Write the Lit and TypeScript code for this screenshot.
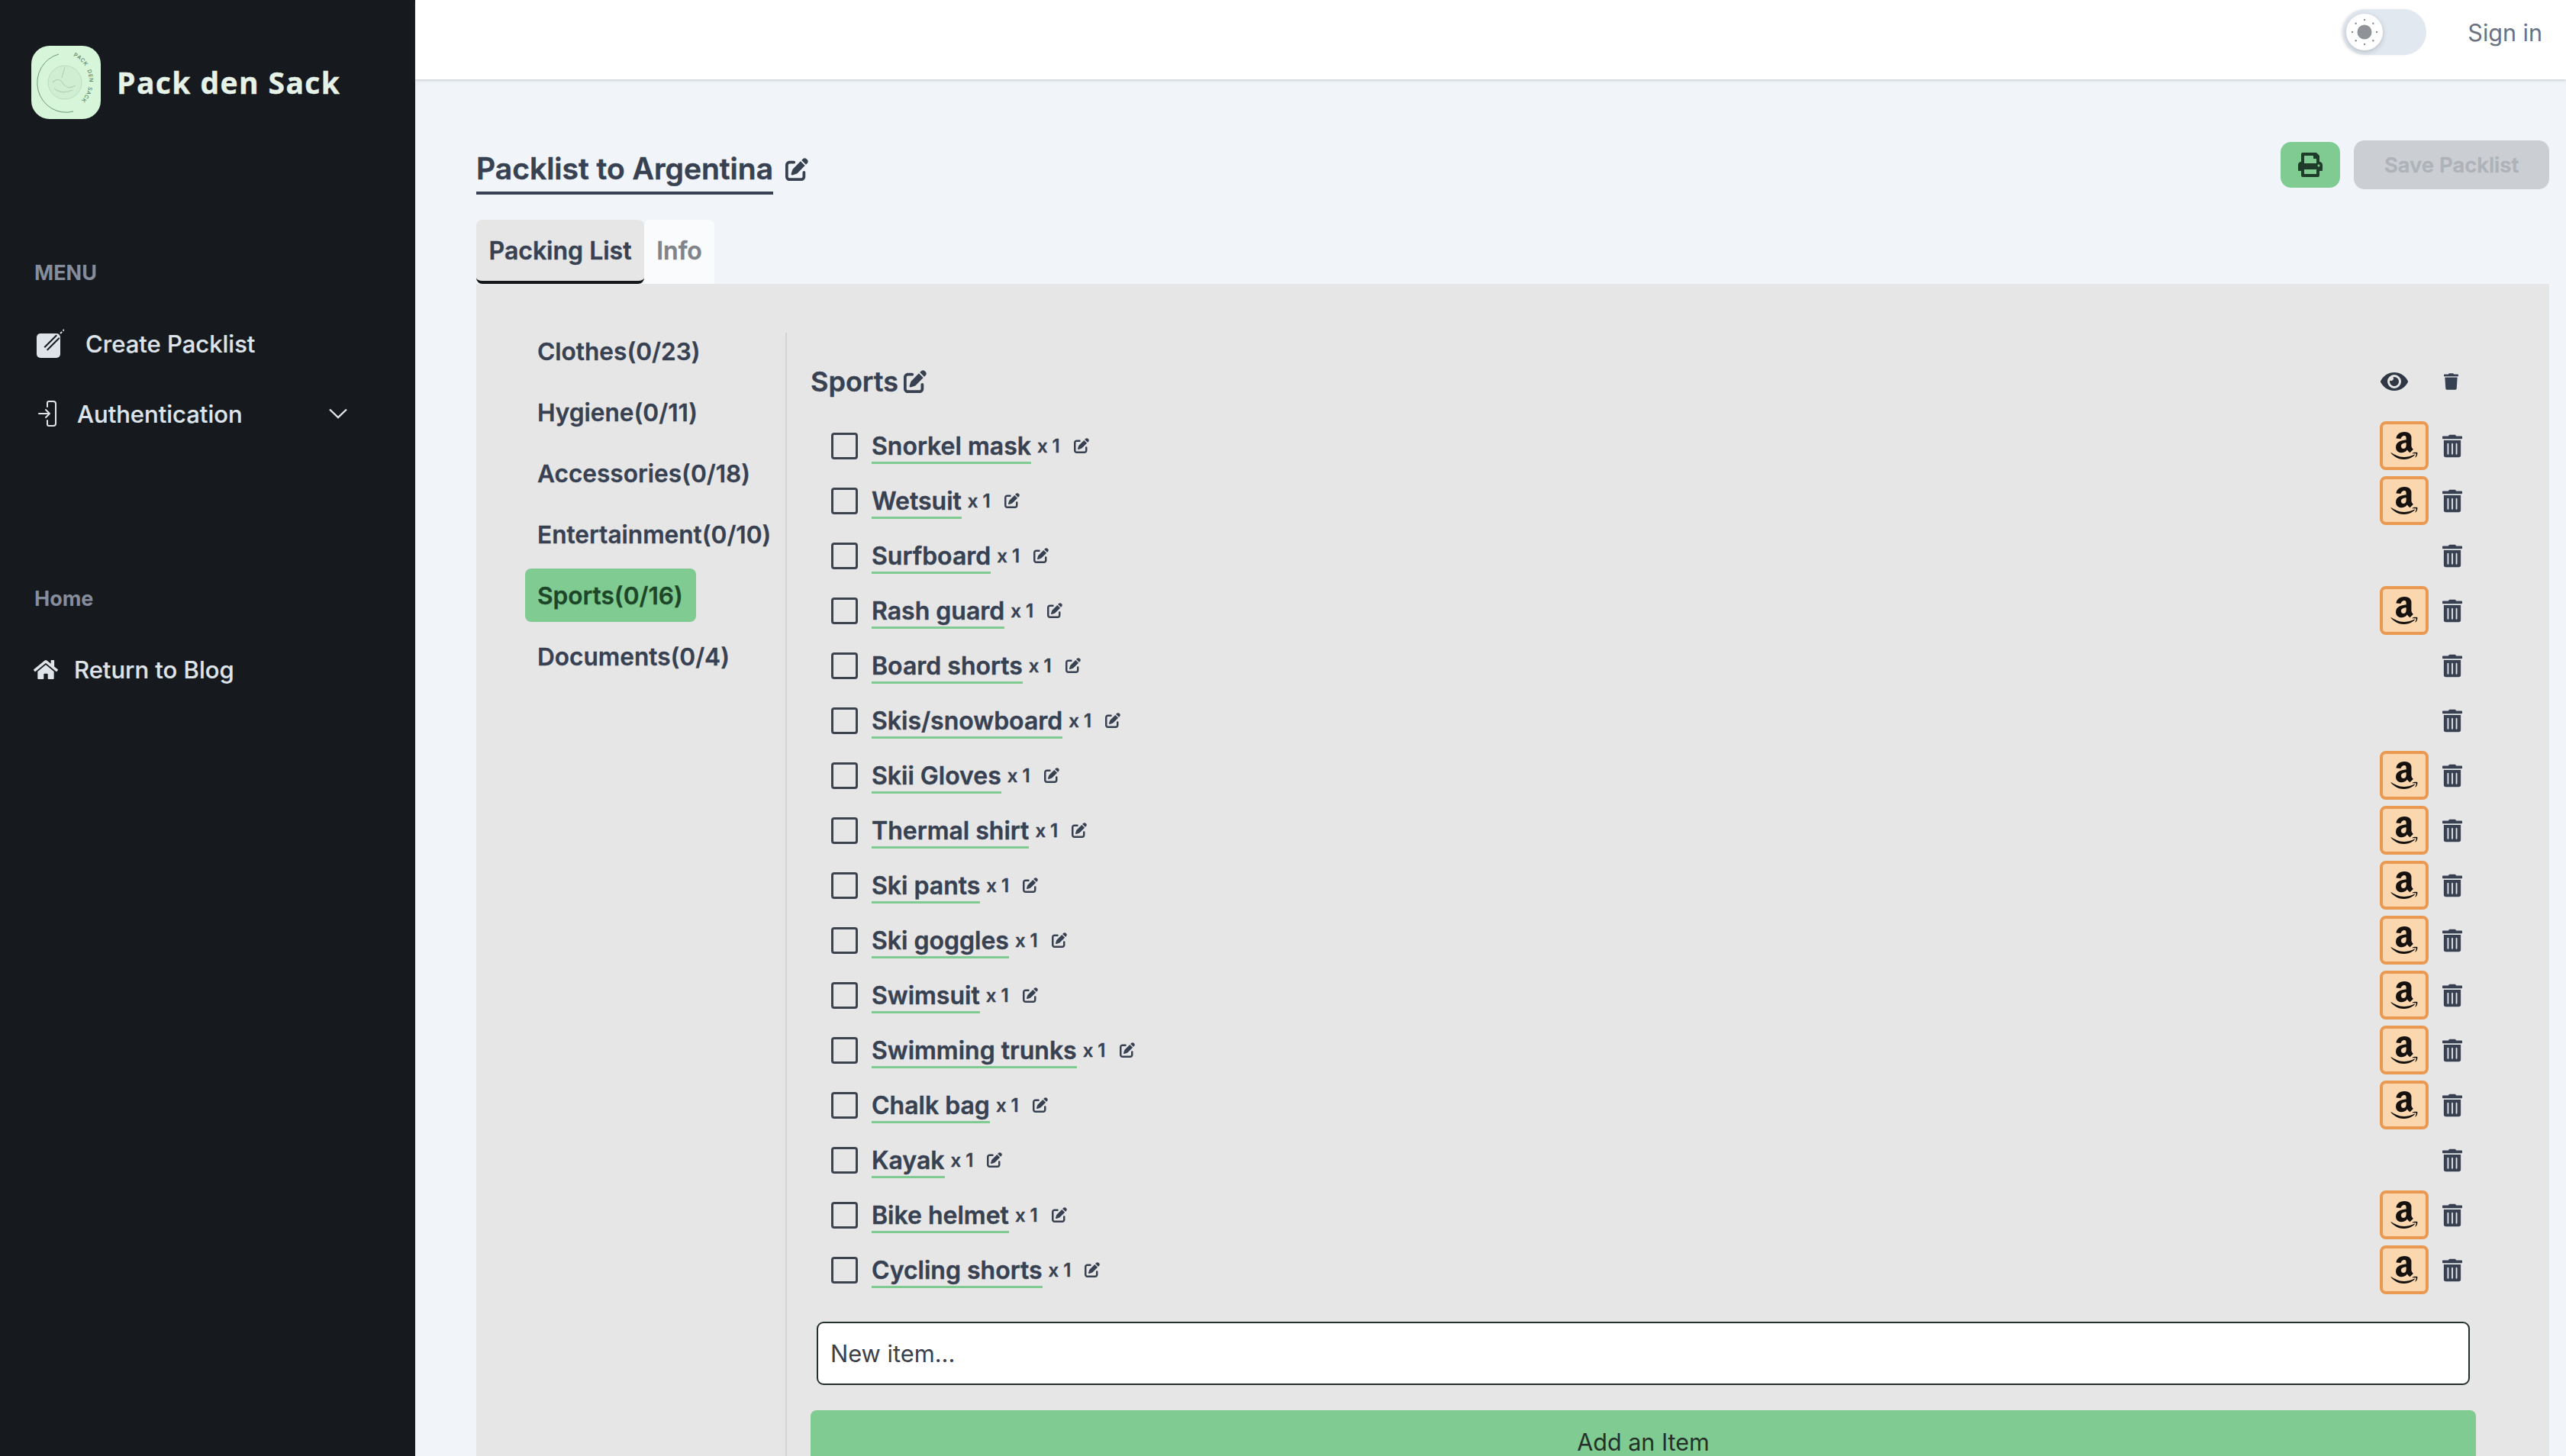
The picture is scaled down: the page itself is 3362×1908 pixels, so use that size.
import { LitElement, html, css, svg } from "lit";
import { customElement } from "lit/decorators.js";

const editIcon = html`<svg class="ic" viewBox="0 0 512 512"><path d="M471.6 21.7c-21.9-21.9-57.3-21.9-79.2 0L362.3 51.7l97.9 97.9 30.1-30.1c21.9-21.9 21.9-57.3 0-79.2L471.6 21.7zm-299.2 220c-6.1 6.1-10.8 13.6-13.5 21.9l-29.6 88.8c-2.9 8.6-.6 18.1 5.8 24.6s15.9 8.7 24.6 5.8l88.8-29.6c8.2-2.7 15.7-7.4 21.9-13.5L437.7 172.3 339.7 74.3 172.4 241.7zM96 64C43 64 0 107 0 160V416c0 53 43 96 96 96H352c53 0 96-43 96-96V320c0-17.7-14.3-32-32-32s-32 14.3-32 32v96c0 17.7-14.3 32-32 32H96c-17.7 0-32-14.3-32-32V160c0-17.7 14.3-32 32-32h96c17.7 0 32-14.3 32-32s-14.3-32-32-32H96z"/></svg>`;
const trashAlt = html`<svg class="ic" viewBox="0 0 448 512"><path d="M32 464a48 48 0 0 0 48 48h288a48 48 0 0 0 48-48V128H32zm272-256a16 16 0 0 1 32 0v224a16 16 0 0 1-32 0zm-96 0a16 16 0 0 1 32 0v224a16 16 0 0 1-32 0zm-96 0a16 16 0 0 1 32 0v224a16 16 0 0 1-32 0zM432 32H312l-9.4-18.7A24 24 0 0 0 281.1 0H166.8a23.72 23.72 0 0 0-21.4 13.3L136 32H16A16 16 0 0 0 0 48v32a16 16 0 0 0 16 16h416a16 16 0 0 0 16-16V48a16 16 0 0 0-16-16z"/></svg>`;
const trashSolid = html`<svg class="ic" viewBox="0 0 448 512"><path d="M432 32H312l-9.4-18.7A24 24 0 0 0 281.1 0H166.8a23.72 23.72 0 0 0-21.4 13.3L136 32H16A16 16 0 0 0 0 48v32a16 16 0 0 0 16 16h416a16 16 0 0 0 16-16V48a16 16 0 0 0-16-16zM53.2 467a48 48 0 0 0 47.9 45h245.8a48 48 0 0 0 47.9-45L416 128H32z"/></svg>`;
const eye = html`<svg class="ic" viewBox="0 0 576 512"><path d="M572.52 241.4C518.29 135.59 410.93 64 288 64S57.68 135.64 3.48 241.41a32.35 32.35 0 0 0 0 29.19C57.71 376.41 165.07 448 288 448s230.32-71.64 284.52-177.41a32.35 32.35 0 0 0 0-29.19zM288 400a144 144 0 1 1 144-144 143.93 143.93 0 0 1-144 144zm0-240a95.31 95.31 0 0 0-25.31 3.79 47.85 47.85 0 0 1-66.9 66.9A95.78 95.78 0 1 0 288 160z"/></svg>`;
const printer = html`<svg class="ic" viewBox="0 0 512 512"><path d="M448 192V77.25c0-8.49-3.37-16.62-9.37-22.63L393.37 9.37c-6-6-14.14-9.37-22.63-9.37H96C78.33 0 64 14.33 64 32v160c-35.35 0-64 28.65-64 64v112c0 8.84 7.16 16 16 16h48v96c0 17.67 14.33 32 32 32h320c17.67 0 32-14.33 32-32v-96h48c8.84 0 16-7.16 16-16V256c0-35.35-28.65-64-64-64zm-64 256H128v-96h256v96zm0-224H128V64h192v48c0 8.84 7.16 16 16 16h48v96zm48 72c-13.25 0-24-10.75-24-24 0-13.26 10.75-24 24-24s24 10.74 24 24c0 13.25-10.75 24-24 24z"/></svg>`;
const home = html`<svg class="ic" viewBox="0 0 576 512"><path d="M280.37 148.26L96 300.11V464a16 16 0 0 0 16 16l112.06-.29a16 16 0 0 0 15.92-16V368a16 16 0 0 1 16-16h64a16 16 0 0 1 16 16v95.64a16 16 0 0 0 16 16.05L464 480a16 16 0 0 0 16-16V300L295.67 148.26a12.19 12.19 0 0 0-15.3 0zM571.6 251.47L488 182.56V44.05a12 12 0 0 0-12-12h-56a12 12 0 0 0-12 12v72.61L318.47 43a48 48 0 0 0-61 0L4.34 251.47a12 12 0 0 0-1.6 16.9l25.5 31A12 12 0 0 0 45.15 301l235.22-193.74a12.19 12.19 0 0 1 15.3 0L530.9 301a12 12 0 0 0 16.9-1.6l25.5-31a12 12 0 0 0-1.7-16.93z"/></svg>`;
const amazon = html`<svg class="ic" viewBox="0 0 448 512"><path d="M257.2 162.7c-48.7 1.8-169.5 15.5-169.5 117.5 0 109.5 138.3 114 183.5 43.2 6.5 10.2 35.4 37.5 45.3 46.8l56.8-56S341 288.9 341 261.4V114.3C341 89 316.5 32 228.7 32 140.7 32 94 87 94 136.3l73.5 6.8c16.3-49.5 54.2-49.5 54.2-49.5 40.7-.1 35.5 29.8 35.5 69.1zm0 86.8c0 80-84.2 68-84.2 17.2 0-47.2 50.5-56.7 84.2-57.8v40.6zm136 163.5c-7.7 10-70 67-174.5 67S34.2 408.5 9.7 379c-6.8-7.7 1-11.3 5.5-8.3C88.5 415.2 203 488.5 387.7 401c7.5-3.7 13.3 2 5.5 12zm39.8 2.2c-6.5 15.8-16 26.8-21.2 31-5.5 4.5-9.5 2.7-6.5-3.8s19.3-46.5 12.7-55c-6.5-8.3-37-4.3-48-3.2-10.8 1-13 2-14-.3-2.3-5.7 21.7-15.5 37.5-17.5 15.7-1.8 41-.8 46 5.7 3.7 5.1 0 27.1-6.5 43.1z"/></svg>`;

const sunDots = [0, 45, 90, 135, 180, 225, 270, 315].map((a) => {
  const r = (a * Math.PI) / 180;
  return svg`<circle cx=${24 + 16 * Math.cos(r)} cy=${24 + 16 * Math.sin(r)} r="1.2" fill="#8a8d92"/>`;
});

const logoLetters = Array.from("PACK DEN SACK").map((ch, i) => {
  const deg = -62 + i * 8.6;
  const r = (deg * Math.PI) / 180;
  const x = 40 + 36 * Math.cos(r);
  const y = 46 + 36 * Math.sin(r);
  return svg`<text class="lg" transform="translate(${x} ${y}) rotate(${deg + 90})" text-anchor="middle">${ch}</text>`;
});

const categories = [
  { t: "Clothes(0/23)" },
  { t: "Hygiene(0/11)" },
  { t: "Accessories(0/18)" },
  { t: "Entertainment(0/10)" },
  { t: "Sports(0/16)", on: true },
  { t: "Documents(0/4)" },
];

const items: [string, boolean][] = [
  ["Snorkel mask", true],
  ["Wetsuit", true],
  ["Surfboard", false],
  ["Rash guard", true],
  ["Board shorts", false],
  ["Skis/snowboard", false],
  ["Skii Gloves", true],
  ["Thermal shirt", true],
  ["Ski pants", true],
  ["Ski goggles", true],
  ["Swimsuit", true],
  ["Swimming trunks", true],
  ["Chalk bag", true],
  ["Kayak", false],
  ["Bike helmet", true],
  ["Cycling shorts", true],
];

@customElement("app-root")
export class AppRoot extends LitElement {
  static styles = css`
    :host {
      display: flex;
      width: 100%;
      height: 100vh;
      overflow: hidden;
      background: #f1f5f9;
      font-family: Inter, "Liberation Sans", sans-serif;
      color: #374151;
    }
    .ic { display: block; fill: currentColor; width: 100%; height: 100%; }
    .side {
      flex: 0 0 544px;
      background: #16191e;
      color: #dee4ea;
      display: flex;
      flex-direction: column;
    }
    .brand { display: flex; align-items: center; gap: 21px; padding: 60px 0 0 41px; height: 96px; }
    .logo { width: 91px; height: 96px; border-radius: 24px; background: #d6f5d9; display: block; flex: none; }
    .lg { font-family: Inter, sans-serif; font-size: 7px; font-weight: 500; fill: #55806a; }
    .brand-name {
      font-family: "Open Sans", Inter, sans-serif;
      font-weight: 700;
      font-size: 39px;
      letter-spacing: 1.4px;
      color: #e6f2e8;
      white-space: nowrap;
      line-height: 52px;
      -webkit-text-stroke: 0.4px currentColor;
    }
    .label { font-size: 27px; font-weight: 700; color: #858c9b; line-height: 34px; padding-left: 45px; }
    .l-menu { margin-top: 185px; }
    .l-home { margin-top: 202px; }
    .nav { display: flex; align-items: center; font-size: 31px; font-weight: 500; height: 48px; white-space: nowrap; -webkit-text-stroke: 0.2px currentColor; }
    .n-create { margin-top: 51px; padding-left: 48px; gap: 28px; }
    .n-create svg { width: 36px; height: 38px; flex: none; }
    .n-auth { margin-top: 44px; padding-left: 50px; gap: 27px; }
    .n-auth svg.door { width: 24px; height: 34px; flex: none; }
    .chev { margin-left: 86px; width: 24px; height: 14px; flex: none; }
    .n-blog { margin-top: 51px; padding-left: 44px; gap: 21px; }
    .n-blog .hi { width: 32px; height: 29px; flex: none; }

    .main { flex: 1; min-width: 0; display: flex; flex-direction: column; }
    .top {
      height: 104px;
      flex: none;
      background: #fff;
      box-shadow: 0 2px 3px rgba(120, 130, 140, 0.28);
      display: flex;
      align-items: flex-start;
      justify-content: flex-end;
      padding-right: 31px;
      box-sizing: border-box;
      position: relative;
      z-index: 1;
    }
    .toggle {
      width: 110px; height: 60px; margin-top: 12px; border-radius: 30px;
      background: #e2e8f0; display: flex; align-items: center; padding-left: 5px; box-sizing: border-box;
      box-shadow: -2px 0 3px rgba(120, 125, 130, 0.12);
    }
    .knob { width: 48px; height: 48px; border-radius: 50%; background: #fff; box-shadow: 0 2px 6px rgba(90, 90, 90, 0.3); }
    .sign { margin: 24px 0 0 54px; font-size: 30.5px; line-height: 38px; color: #6b7280; }

    .content { flex: 1; padding: 80px 22px 0 80px; min-height: 0; display: flex; flex-direction: column; }
    .title-row { display: flex; justify-content: space-between; align-items: flex-start; height: 104px; }
    .title-l { display: flex; align-items: flex-start; gap: 16px; margin-top: 10px; }
    .title {
      font-size: 39px; font-weight: 600; line-height: 53px; height: 61px; box-sizing: border-box;
      border-bottom: 4px solid #374151; white-space: nowrap; -webkit-text-stroke: 0.5px currentColor;
    }
    .t-ic { width: 30px; height: 30px; margin-top: 13px; flex: none; }
    .actions { display: flex; gap: 18px; align-items: center; }
    .print {
      width: 78px; height: 60px; border-radius: 14px; background: #7fcb91; color: #1f3b2a;
      display: flex; align-items: center; justify-content: center;
    }
    .print div { width: 32px; height: 32px; }
    .save {
      width: 256px; height: 64px; border-radius: 14px; background: #cbcfd4; color: #aeb3ba;
      font-size: 27.5px; font-weight: 600; display: flex; align-items: center; justify-content: center;
      -webkit-text-stroke: 0.4px currentColor;
    }
    .tabs { display: flex; height: 84px; flex: none; }
    .tab {
      font-size: 32px; font-weight: 600; display: flex; align-items: center; justify-content: center;
      box-sizing: border-box; border-radius: 8px 8px 0 0; -webkit-text-stroke: 0.4px currentColor;
    }
    .tab.a { width: 220px; background: #e6e6e6; border-bottom: 4px solid #14161a; border-radius: 8px; }
    .tab.b { width: 92px; color: #808388; background: #f9fbfc; padding-bottom: 4px; }

    .panel { flex: 1; background: #e6e6e6; display: flex; padding-top: 53px; min-height: 0; }
    .cats { flex: 0 0 405px; min-width: 0; padding-left: 64px; box-sizing: border-box; display: flex; flex-direction: column; gap: 10px; align-items: flex-start; }
    .cat {
      height: 70px; padding: 0 17px 0 16px; border-radius: 8px; box-sizing: border-box; display: flex; align-items: center;
      font-size: 31.6px; font-weight: 600; white-space: nowrap; -webkit-text-stroke: 0.3px currentColor;
    }
    .cat.on { background: #7fcb91; color: #1d4629; }
    .list { flex: 1; min-width: 0; margin-top: 11px; border-left: 2px solid #d2d4d5; padding: 0 96px 0 31px; }
    .sec { display: flex; align-items: center; height: 48px; padding-top: 40px; padding-bottom: 24px; }
    .sec-name { font-size: 36px; font-weight: 600; line-height: 48px; -webkit-text-stroke: 0.4px currentColor; }
    .sec-e { width: 30px; height: 30px; margin-left: 7px; flex: none; }
    .sec-r { margin-left: auto; display: flex; align-items: center; margin-right: 24px; }
    .eye { width: 36px; height: 32px; color: #2f3844; }
    .st { width: 19px; height: 22px; margin-left: 47px; margin-right: -1px; }
    .row { height: 72px; display: flex; align-items: center; padding: 0 18px 0 27px; }
    .cb { width: 35px; height: 35px; box-sizing: border-box; border: 3.5px solid #3c4350; border-radius: 4px; flex: none; }
    .name {
      margin-left: 18px; font-size: 32px; font-weight: 600; line-height: 35px; height: 41px; box-sizing: border-box;
      border-bottom: 3px solid #7fcb91; white-space: nowrap; -webkit-text-stroke: 0.4px currentColor;
      position: relative; top: 3px;
    }
    .qty { margin-left: 8px; font-size: 24px; font-weight: 600; white-space: nowrap; -webkit-text-stroke: 0.3px currentColor; }
    .e { width: 20px; height: 20px; margin-left: 18px; flex: none; }
    .amz {
      margin-left: auto; width: 64px; height: 64px; box-sizing: border-box; border: 4px solid #ea9a50;
      border-radius: 8px; background: #fad7ae; color: #14110e; display: flex; align-items: center; justify-content: center; flex: none;
    }
    .amz div { width: 36px; height: 44px; }
    .tr { width: 26px; height: 31px; margin-left: 18px; flex: none; }
    .row.noamz .tr { margin-left: auto; }
    .input {
      margin: 32px 8px 0; height: 83px; box-sizing: border-box; background: #fff; border: 2.5px solid #24302e;
      border-radius: 9px; padding-left: 16px; display: flex; align-items: center; font-size: 30.8px; color: #3a3f4a;
    }
    .add {
      margin-top: 33px; height: 82px; background: #7fcb91; border-radius: 8px; color: #25302a;
      font-size: 30.5px; font-weight: 400; display: flex; align-items: center; justify-content: center;
    }
  `;

  render() {
    return html`
      <aside class="side">
        <div class="brand">
          <svg class="logo" viewBox="0 0 91 96">
            <path d="M36 11 A36 37 0 0 0 55 86" fill="none" stroke="#6b9a7a" stroke-width="1"/>
            <circle cx="44" cy="48" r="22" fill="#cfeed2" stroke="#bcdcc2" stroke-width="1"/>
            <path d="M28 48 q8 -8 14 2 q6 8 16 2 M44 28 l-4 14 M30 56 q10 8 24 2" fill="none" stroke="#b3d3b9" stroke-width="1.2"/>
            ${logoLetters}
          </svg>
          <div class="brand-name">Pack den Sack</div>
        </div>
        <div class="label l-menu">MENU</div>
        <div class="nav n-create">
          <svg viewBox="0 0 36 38">
            <rect x="0" y="6" width="31" height="32" rx="5" fill="#dee4ea"/>
            <path d="M12 26 L28 10" stroke="#16191e" stroke-width="7" fill="none"/>
            <path d="M12 26 L28 10" stroke="#dee4ea" stroke-width="3" fill="none" stroke-linecap="round"/>
            <path d="M31 6 L36 1" stroke="#dee4ea" stroke-width="2" stroke-dasharray="3 2" fill="none"/>
          </svg>
          <span>Create Packlist</span>
        </div>
        <div class="nav n-auth">
          <svg class="door" viewBox="0 0 24 34" fill="none" stroke="#dee4ea" stroke-width="2" stroke-linecap="round" stroke-linejoin="round">
            <path d="M12 8 V3 a2 2 0 0 1 2 -2 h6 a3 3 0 0 1 3 3 v26 a3 3 0 0 1 -3 3 h-6 a2 2 0 0 1 -2 -2 v-5"/>
            <path d="M1 17 H15 M10 12 l5 5 l-5 5"/>
          </svg>
          <span>Authentication</span>
          <svg class="chev" viewBox="0 0 24 14" fill="none" stroke="#dee4ea" stroke-width="2.4"><path d="M1 1.5 L12 12 L23 1.5"/></svg>
        </div>
        <div class="label l-home">Home</div>
        <div class="nav n-blog">
          <div class="hi">${home}</div>
          <span>Return to Blog</span>
        </div>
      </aside>
      <div class="main">
        <header class="top">
          <div class="toggle">
            <div class="knob">
              <svg viewBox="0 0 48 48" width="48" height="48">
                <circle cx="24" cy="24" r="9.5" fill="#8f9297"/>
                ${sunDots}
              </svg>
            </div>
          </div>
          <div class="sign">Sign in</div>
        </header>
        <div class="content">
          <div class="title-row">
            <div class="title-l">
              <div class="title">Packlist to Argentina</div>
              <div class="t-ic">${editIcon}</div>
            </div>
            <div class="actions">
              <div class="print"><div>${printer}</div></div>
              <div class="save">Save Packlist</div>
            </div>
          </div>
          <div class="tabs">
            <div class="tab a">Packing List</div>
            <div class="tab b">Info</div>
          </div>
          <div class="panel">
            <div class="cats">
              ${categories.map((c) => html`<div class="cat ${c.on ? "on" : ""}">${c.t}</div>`)}
            </div>
            <div class="list">
              <div class="sec">
                <span class="sec-name">Sports</span>
                <div class="sec-e">${editIcon}</div>
                <div class="sec-r">
                  <div class="eye">${eye}</div>
                  <div class="st">${trashSolid}</div>
                </div>
              </div>
              ${items.map(
                ([n, a]) => html`
                  <div class="row ${a ? "" : "noamz"}">
                    <div class="cb"></div>
                    <span class="name">${n}</span>
                    <span class="qty">x 1</span>
                    <div class="e">${editIcon}</div>
                    ${a ? html`<div class="amz"><div>${amazon}</div></div>` : ""}
                    <div class="tr">${trashAlt}</div>
                  </div>
                `
              )}
              <div class="input">New item...</div>
              <div class="add">Add an Item</div>
            </div>
          </div>
        </div>
      </div>
    `;
  }
}
